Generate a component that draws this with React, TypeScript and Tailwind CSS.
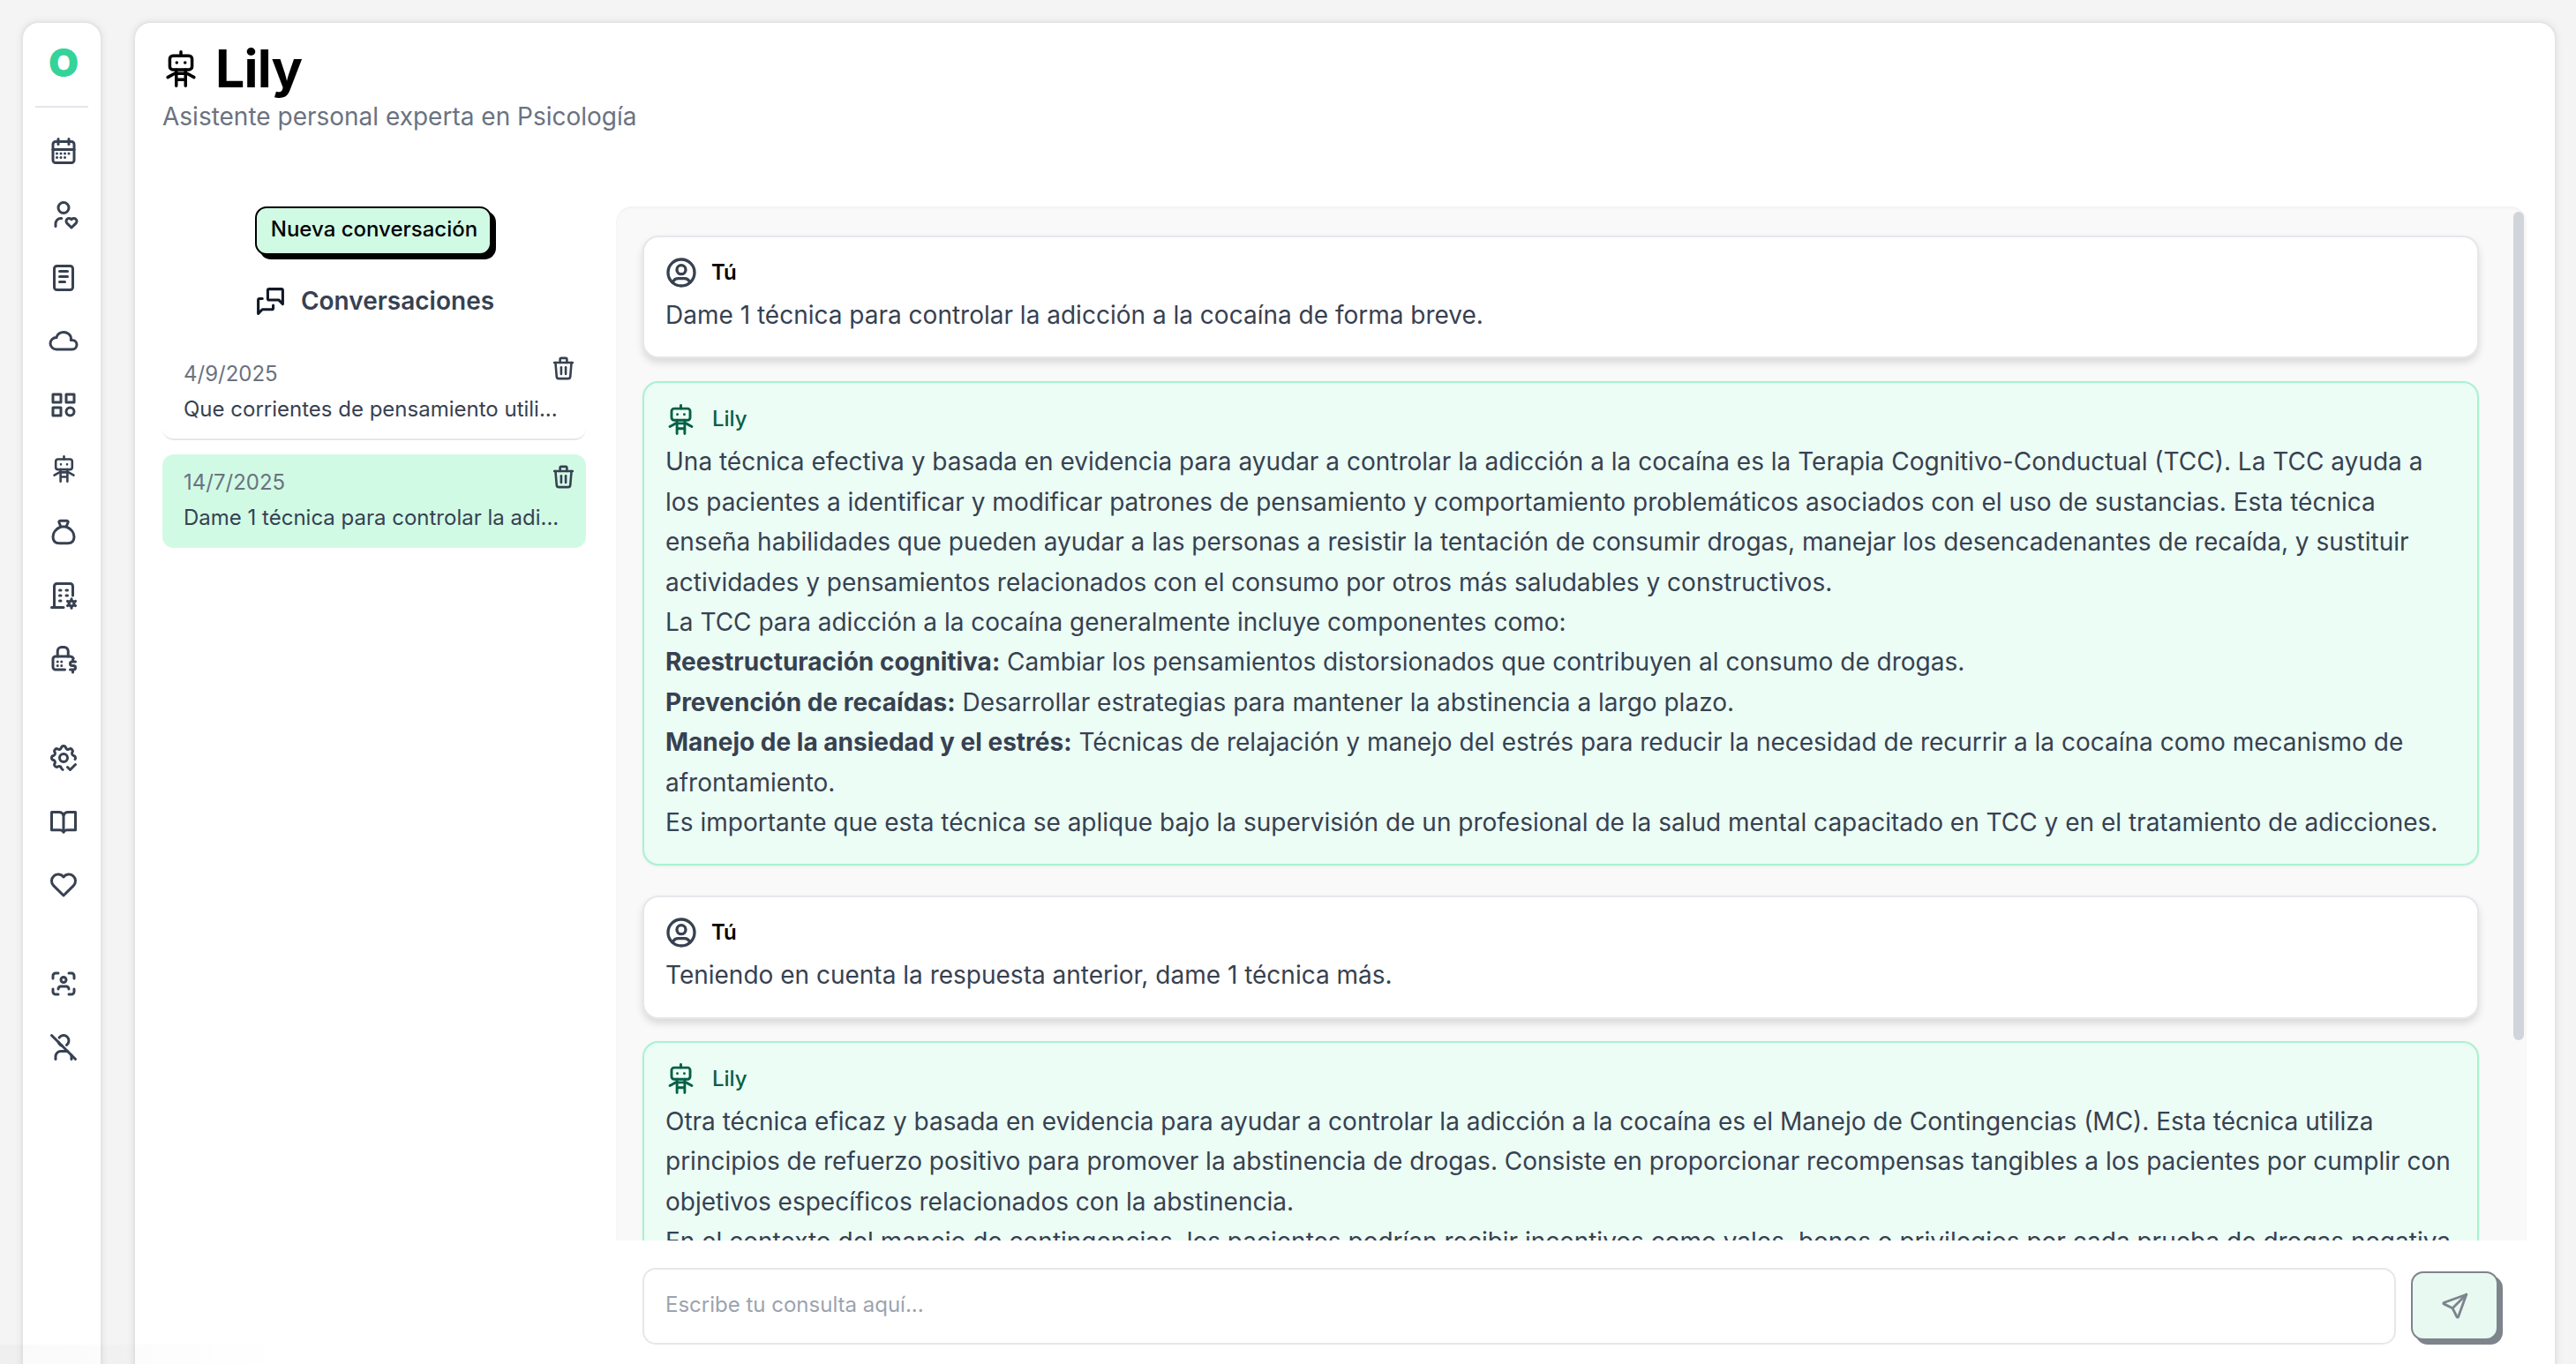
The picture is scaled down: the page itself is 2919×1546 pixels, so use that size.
import { TbCalendarMonth, TbUserHeart, TbNotes, TbCloud, TbCategory, TbBuildingCog, TbSettingsCheck, TbHeart, TbUserScan, TbUserOff, TbTrash, TbUserCircle, TbMessages, TbSend } from 'react-icons/tb';

const font = { fontFamily: 'Inter, sans-serif' };

function Robot({ size = 36, className = '' }: { size?: number; className?: string }) {
  return (
    <svg width={size} height={size} viewBox="0 0 24 24" fill="none" stroke="currentColor" strokeWidth="2" strokeLinecap="round" strokeLinejoin="round" className={className}>
      <rect x="4.8" y="3.5" width="14.4" height="9" rx="2" />
      <path d="M12 1v2.5" />
      <path d="M9.3 8h.01M14.7 8h.01" />
      <path d="M3.5 17.5L8 15h8l4.500 2.5" />
      <path d="M9 12.5V23M15 12.5V23M9 19h6" />
    </svg>
  );
}

function NavRobot({ size = 36 }: { size?: number }) {
  return (
    <div className="flex items-center justify-center" style={{ width: size, height: size }}>
      <Robot size={31} />
    </div>
  );
}

function Sack({ size = 36 }: { size?: number }) {
  return (
    <svg width={size} height={size} viewBox="0 0 24 24" fill="none" stroke="currentColor" strokeWidth="2" strokeLinecap="round" strokeLinejoin="round">
      <path d="M9.500 3.500h5c.8 0 1.200.8.8 1.500L14 8h-4L8.700 5c-.4-.7 0-1.500.8-1.500z" />
      <path d="M10 8C6.500 9.500 4 12.500 4 15.500 4 19 6 20.500 9 20.500h6c3 0 5-1.500 5-5 0-3-2.500-6-6-7.500" />
    </svg>
  );
}

function OpenBook({ size = 36 }: { size?: number }) {
  return (
    <svg width={size} height={size} viewBox="0 0 24 24" fill="none" stroke="currentColor" strokeWidth="2" strokeLinecap="round" strokeLinejoin="round">
      <path d="M3 5h5.500c1.700 0 3 .9 3.500 2.500C12.500 5.900 13.800 5 15.500 5H21v13.500h-6c-1.400 0-2.500.5-3 1.500-.5-1-1.600-1.500-3-1.500H3z" />
      <path d="M12 7.500V20" />
    </svg>
  );
}

function FaxDollar({ size = 36 }: { size?: number }) {
  return (
    <svg width={size} height={size} viewBox="0 0 24 24" fill="none" stroke="currentColor" strokeWidth="2" strokeLinecap="round" strokeLinejoin="round">
      <path d="M13 20H6a2 2 0 0 1-2-2v-6a2 2 0 0 1 2-2h11a3 3 0 0 1 2.500 1.500" />
      <path d="M7.500 10V6a3 3 0 0 1 3-3h2a3 3 0 0 1 3 3v4" />
      <path d="M7.500 14h.01M10.500 14h.01M7.500 17h.01M10.500 17h.01" />
      <path d="M21 14h-2.500a1.500 1.500 0 0 0 0 3h1a1.500 1.500 0 0 1 0 3H17M19 21v1M19 12.500v1" />
    </svg>
  );
}

const navGroups = [
  [TbCalendarMonth, TbUserHeart, TbNotes, TbCloud, TbCategory, NavRobot, Sack, TbBuildingCog, FaxDollar],
  [TbSettingsCheck, OpenBook, TbHeart],
  [TbUserScan, TbUserOff],
];

function UserMsg({ text, className = '' }: { text: string; className?: string }) {
  return (
    <div className={`rounded-[18px] border-2 border-[#e5e7eb] bg-white px-[24px] pt-[23px] pb-[24px] shadow-[0_5px_9px_rgba(0,0,0,0.13)] ${className}`}>
      <div className="flex h-[34px] items-center gap-[14px] text-[24px] leading-[34px] font-semibold text-black">
        <TbUserCircle size={40} className="ml-[-2px] text-[#374151]" />
        <span>Tú</span>
      </div>
      <p className="mt-[9px] text-[28px] leading-[45.4px] text-[#374151]">{text}</p>
    </div>
  );
}

function LilyMsg({ children, className = '' }: { children: React.ReactNode; className?: string }) {
  return (
    <div className={`rounded-[18px] border-2 border-[#a7f3d0] bg-[#ecfdf5] px-[24px] pt-[24px] pb-[24px] shadow-[0_1px_3px_rgba(0,0,0,0.06)] ${className}`}>
      <div className="flex h-[34px] items-center gap-[18px] text-[24px] leading-[34px] font-medium text-[#065f46]">
        <Robot size={35} className="text-[#065f46]" />
        <span>Lily</span>
      </div>
      <div className="mt-[9px] text-[28px] leading-[45.4px] text-[#374151]">{children}</div>
    </div>
  );
}

export default function App() {
  return (
    <div style={font} className="relative flex h-[1546px] w-[2919px] gap-[35px] overflow-hidden bg-[#f4f4f4] pt-[24px] pr-[22px] pl-[24px]">
      {/* sidebar */}
      <aside className="flex h-[1600px] w-[92px] shrink-0 flex-col items-center rounded-t-[20px] border-2 border-[#e5e5e5] bg-white shadow-[0_0_9px_rgba(0,0,0,0.08)]">
        <div className="mt-[21px] pl-[4px] text-[44px] leading-[48px] font-black text-[#34d399]">O</div>
        <div className="mt-[25px] h-[2px] w-[60px] bg-[#e5e7eb]" />
        <div className="mt-[31px] flex flex-col items-center gap-[76px] pl-[4px] text-[#374151]">
          {navGroups.map((group, g) => (
            <div key={g} className="flex flex-col items-center gap-[36px]">
              {group.map((Icon, i) => (
                <Icon key={i} size={36} />
              ))}
            </div>
          ))}
        </div>
      </aside>

      {/* main */}
      <main className="flex h-[1600px] min-w-0 flex-1 flex-col rounded-t-[20px] border-2 border-[#e5e5e5] bg-white pt-[20px] pr-[32px] pl-[31px] shadow-[0_0_9px_rgba(0,0,0,0.08)]">
        <header className="h-[188px] shrink-0">
          <div className="flex items-center gap-[18px]">
            <Robot size={42} className="text-black" />
            <h1 className="text-[59px] leading-[64px] font-bold tracking-[-0.8px] text-black">Lily</h1>
          </div>
          <p className="text-[28px] leading-[44px] text-[#6b7280]">Asistente personal experta en Psicología</p>
        </header>

        <div className="flex min-h-0 gap-[34px]">
          {/* conversations */}
          <section className="w-[480px] shrink-0">
            <div className="flex justify-center">
              <button className="mr-[2px] h-[55px] w-[268px] rounded-[13px] border-2 border-black bg-[#d1fae5] pb-[3px] pl-[2px] text-[24px] leading-[34px] font-medium text-black shadow-[5px_5px_0_#000]">
                Nueva conversación
              </button>
            </div>
            <div className="mt-[32px] flex items-center justify-center gap-[16px] text-[28px] leading-[40px] font-semibold text-[#374151]">
              <TbMessages size={37} className="text-[#111827]" />
              <span>Conversaciones</span>
            </div>
            <div className="mt-[31px] flex flex-col gap-[16px]">
              <div className="relative h-[107px] rounded-[13px] border-b-2 border-[#e5e7eb] px-[24px] pt-[14px]">
                <div className="text-[24px] leading-[36px] text-[#6b7280]">4/9/2025</div>
                <div className="mt-[4px] truncate text-[24px] leading-[36px] text-[#374151]">Que corrientes de pensamiento utili...</div>
                <TbTrash size={31} className="absolute top-[10px] right-[10px] text-[#374151]" />
              </div>
              <div className="relative h-[106px] rounded-[13px] bg-[#d1fae5] px-[24px] pt-[14px]">
                <div className="text-[24px] leading-[36px] text-[#6b7280]">14/7/2025</div>
                <div className="mt-[4px] truncate text-[24px] leading-[36px] text-[#374151]">Dame 1 técnica para controlar la adi...</div>
                <TbTrash size={31} className="absolute top-[10px] right-[10px] text-[#374151]" />
              </div>
            </div>
          </section>

          {/* chat */}
          <section className="min-w-0 flex-1">
            <div className="relative h-[1172px] overflow-hidden rounded-t-[18px] bg-[#f9f9f9] pt-[33px] pr-[54px] pl-[30px] shadow-[inset_0_2px_3px_rgba(0,0,0,0.03)]">
              <div className="flex flex-col gap-[26px]">
                <UserMsg text="Dame 1 técnica para controlar la adicción a la cocaína de forma breve." />
                <LilyMsg>
                  <p>Una técnica efectiva y basada en evidencia para ayudar a controlar la adicción a la cocaína es la Terapia Cognitivo-Conductual (TCC). La TCC ayuda a los pacientes a identificar y modificar patrones de pensamiento y comportamiento problemáticos asociados con el uso de sustancias. Esta técnica enseña habilidades que pueden ayudar a las personas a resistir la tentación de consumir drogas, manejar los desencadenantes de recaída, y sustituir actividades y pensamientos relacionados con el consumo por otros más saludables y constructivos.</p>
                  <p>La TCC para adicción a la cocaína generalmente incluye componentes como:</p>
                  <p><b>Reestructuración cognitiva:</b> Cambiar los pensamientos distorsionados que contribuyen al consumo de drogas.</p>
                  <p><b>Prevención de recaídas:</b> Desarrollar estrategias para mantener la abstinencia a largo plazo.</p>
                  <p><b>Manejo de la ansiedad y el estrés:</b> Técnicas de relajación y manejo del estrés para reducir la necesidad de recurrir a la cocaína como mecanismo de afrontamiento.</p>
                  <p>Es importante que esta técnica se aplique bajo la supervisión de un profesional de la salud mental capacitado en TCC y en el tratamiento de adicciones.</p>
                </LilyMsg>
                <UserMsg className="mt-[8px]" text="Teniendo en cuenta la respuesta anterior, dame 1 técnica más." />
                <LilyMsg className="mt-[-1px]">
                  <p>Otra técnica eficaz y basada en evidencia para ayudar a controlar la adicción a la cocaína es el Manejo de Contingencias (MC). Esta técnica utiliza principios de refuerzo positivo para promover la abstinencia de drogas. Consiste en proporcionar recompensas tangibles a los pacientes por cumplir con objetivos específicos relacionados con la abstinencia.</p>
                  <p>En el contexto del manejo de contingencias, los pacientes podrían recibir incentivos como vales, bonos o privilegios por cada prueba de drogas negativa</p>
                </LilyMsg>
              </div>
              <div className="absolute top-[6px] right-[3px] h-[939px] w-[12px] rounded-[6px] bg-[#d1d5db]" />
            </div>
            <div className="mt-[31px] flex items-start gap-[17px] pl-[30px]">
              <div className="flex h-[87px] w-[1987px] items-center rounded-[15px] border-2 border-[#e5e7eb] bg-white pb-[4px] pl-[24px] text-[24px] text-[#9ca3af]">
                Escribe tu consulta aquí...
              </div>
              <button className="mt-[4px] flex h-[78px] w-[99px] items-center justify-center rounded-[14px] border-2 border-[#7d848c] bg-[#e8f9f1] shadow-[5px_5px_0_#7d848c]">
                <TbSend size={34} className="text-[#7d848c]" />
              </button>
            </div>
          </section>
        </div>
      </main>
      <div className="pointer-events-none absolute bottom-0 left-0 h-[22px] w-[340px] bg-gradient-to-r from-black/[0.02] to-transparent" />
    </div>
  );
}
